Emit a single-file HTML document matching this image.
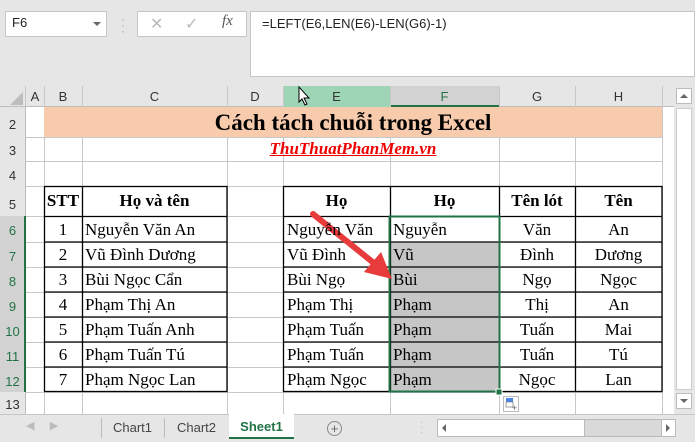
<!DOCTYPE html>
<html><head><meta charset="utf-8"><style>
*{margin:0;padding:0;box-sizing:border-box}
body{width:695px;height:442px;overflow:hidden;background:#e6e6e6;position:relative;font-family:"Liberation Sans",sans-serif}
.a{position:absolute}
.c{position:absolute;font-family:"Liberation Serif",serif;font-size:17px;line-height:25px;white-space:nowrap;color:#000}
.hd{position:absolute;font-size:13px;color:#333;text-align:center;line-height:21px}
.rh{position:absolute;left:0;width:25px;font-size:13px;color:#333;text-align:center}
</style></head><body>
<!-- formula bar -->
<div class="a" style="left:5px;top:11px;width:102px;height:26px;background:#fff;border:1px solid #c6c6c6"></div>
<div class="a" style="left:12px;top:15px;font-size:13px;color:#222">F6</div>
<div class="a" style="left:93px;top:22px;width:0;height:0;border-left:4px solid transparent;border-right:4px solid transparent;border-top:4px solid #666"></div>
<div class="a" style="left:121px;top:16px;color:#aaa;font-size:12px;line-height:6px">·<br>·<br>·</div>
<div class="a" style="left:137px;top:11px;width:110px;height:26px;background:#fff;border:1px solid #c6c6c6"></div>
<div class="a" style="left:150px;top:14px;color:#bbb;font-size:16px">✕</div>
<div class="a" style="left:185px;top:14px;color:#bbb;font-size:16px">✓</div>
<div class="a" style="left:222px;top:13px;color:#555;font-size:15px;font-style:italic;font-family:'Liberation Serif',serif">fx</div>
<div class="a" style="left:250px;top:11px;width:445px;height:66px;background:#fff;border:1px solid #c6c6c6"></div>
<div class="a" style="left:262px;top:16px;font-size:13px;color:#222">=LEFT(E6,LEN(E6)-LEN(G6)-1)</div>
<!-- sheet bg -->
<div class="a" style="left:0;top:86px;width:674px;height:328px;background:#fff"></div>
<!-- column headers -->
<div class="a" style="left:0;top:86px;width:674px;height:21px;background:#e6e6e6;border-bottom:1px solid #bdbdbd"></div>
<div class="a" style="left:10px;top:92px;width:0;height:0;border-left:13px solid transparent;border-bottom:13px solid #bdbdbd"></div>
<div class="a" style="left:283px;top:86px;width:107px;height:21px;background:#9fd5b7"></div>
<div class="a" style="left:390px;top:86px;width:109px;height:21px;background:#d2d2d2;border-bottom:2px solid #217346"></div>
<div class="hd" style="left:26px;top:86px;width:18px">A</div>
<div class="hd" style="left:44px;top:86px;width:38px">B</div>
<div class="hd" style="left:82px;top:86px;width:145px">C</div>
<div class="hd" style="left:227px;top:86px;width:56px">D</div>
<div class="hd" style="left:283px;top:86px;width:107px">E</div>
<div class="hd" style="left:390px;top:86px;width:109px;color:#217346">F</div>
<div class="hd" style="left:499px;top:86px;width:76px">G</div>
<div class="hd" style="left:575px;top:86px;width:87px">H</div>
<svg class="a" style="left:0;top:86px" width="674" height="328">
<g stroke="#c8c8c8" stroke-width="1">
<line x1="25.5" y1="0" x2="25.5" y2="21"/><line x1="44.5" y1="0" x2="44.5" y2="328"/><line x1="82.5" y1="0" x2="82.5" y2="328"/><line x1="227.5" y1="0" x2="227.5" y2="328"/><line x1="283.5" y1="0" x2="283.5" y2="328"/><line x1="390.5" y1="0" x2="390.5" y2="328"/><line x1="499.5" y1="0" x2="499.5" y2="328"/><line x1="575.5" y1="0" x2="575.5" y2="328"/><line x1="662.5" y1="0" x2="662.5" y2="328"/>
<line x1="0" y1="51.5" x2="662" y2="51.5"/><line x1="0" y1="75.5" x2="662" y2="75.5"/><line x1="0" y1="100.5" x2="662" y2="100.5"/><line x1="0" y1="130.5" x2="662" y2="130.5"/><line x1="0" y1="156.5" x2="662" y2="156.5"/><line x1="0" y1="181.5" x2="662" y2="181.5"/><line x1="0" y1="206.5" x2="662" y2="206.5"/><line x1="0" y1="231.5" x2="662" y2="231.5"/><line x1="0" y1="256.5" x2="662" y2="256.5"/><line x1="0" y1="281.5" x2="662" y2="281.5"/><line x1="0" y1="306.5" x2="662" y2="306.5"/>
</g></svg>
<!-- row headers -->
<div class="a" style="left:0;top:107px;width:26px;height:307px;background:#e6e6e6;border-right:1px solid #bdbdbd"></div>
<div class="a" style="left:0;top:216px;width:26px;height:176px;background:#d2d2d2;border-right:2px solid #217346"></div>
<div class="rh" style="top:107px;line-height:36px">2</div>
<div class="rh" style="top:137px;line-height:28px">3</div>
<div class="rh" style="top:161px;line-height:30px">4</div>
<div class="rh" style="top:186px;line-height:38px">5</div>
<div class="rh" style="top:216px;line-height:30px;color:#217346">6</div>
<div class="rh" style="top:242px;line-height:30px;color:#217346">7</div>
<div class="rh" style="top:267px;line-height:30px;color:#217346">8</div>
<div class="rh" style="top:292px;line-height:30px;color:#217346">9</div>
<div class="rh" style="top:317px;line-height:30px;color:#217346">10</div>
<div class="rh" style="top:342px;line-height:30px;color:#217346">11</div>
<div class="rh" style="top:367px;line-height:30px;color:#217346">12</div>
<div class="rh" style="top:392px;line-height:26px">13</div>
<!-- title -->
<div class="a" style="left:44px;top:107px;width:618px;height:30px;background:#f8cbad"></div>
<div class="c" style="left:44px;top:108px;width:618px;text-align:center;font-size:23px;font-weight:bold;line-height:30px">Cách tách chuỗi trong Excel</div>
<div class="c" style="left:44px;top:137px;width:618px;text-align:center;font-size:17px;font-weight:bold;font-style:italic;color:#e00;text-decoration:underline;line-height:24px">ThuThuatPhanMem.vn</div>
<!-- F fill -->
<div class="a" style="left:390px;top:242px;width:109px;height:150px;background:#c6c6c6"></div>
<!-- tables -->
<svg class="a" style="left:0;top:0" width="695" height="442">
<g stroke="#000" stroke-width="1.3" fill="none">
<rect x="44.5" y="186.5" width="182.5" height="205"/>
<line x1="82.5" y1="186" x2="82.5" y2="392"/>
<rect x="283.5" y="186.5" width="378.5" height="205"/>
<line x1="390.5" y1="186" x2="390.5" y2="392"/><line x1="499.5" y1="186" x2="499.5" y2="392"/><line x1="575.5" y1="186" x2="575.5" y2="392"/>
<path d="M44 216.5H227M44 242H227M44 267H227M44 292H227M44 317H227M44 342H227M44 367H227"/>
<path d="M283 216.5H662M283 242H662M283 267H662M283 292H662M283 317H662M283 342H662M283 367H662"/>
</g>
<rect x="389.5" y="216.5" width="110" height="175" fill="none" stroke="#217346" stroke-width="2"/>
<rect x="496" y="389" width="6" height="6" fill="#217346" stroke="#fff"/>
<rect x="503.5" y="396.5" width="15" height="15" fill="#fff" stroke="#bbb"/>
<rect x="506" y="398" width="7" height="4" fill="#4a86e8"/>
<rect x="506" y="402" width="7" height="5" fill="none" stroke="#888" stroke-width="0.8"/>
<text x="512" y="411" font-size="9" fill="#666">+</text>
<!-- arrow -->
<line x1="313" y1="214" x2="375" y2="264" stroke="#e83b3b" stroke-width="6" stroke-linecap="round"/>
<polygon points="392,279 364,272 381,252" fill="#e83b3b"/>
<!-- cursor -->
<path d="M299 87 L299 102 L302 99 L305 105 L307 104 L304 98 L309 98 Z" fill="#fff" stroke="#000" stroke-width="1"/>
</svg>
<!-- headers row 5 -->
<div class="c" style="left:44px;top:188px;width:38px;text-align:center;font-weight:bold">STT</div>
<div class="c" style="left:82px;top:188px;width:145px;text-align:center;font-weight:bold">Họ và tên</div>
<div class="c" style="left:283px;top:188px;width:107px;text-align:center;font-weight:bold">Họ</div>
<div class="c" style="left:390px;top:188px;width:109px;text-align:center;font-weight:bold">Họ</div>
<div class="c" style="left:499px;top:188px;width:76px;text-align:center;font-weight:bold">Tên lót</div>
<div class="c" style="left:575px;top:188px;width:87px;text-align:center;font-weight:bold">Tên</div>
<!-- data -->
<div class="c" style="left:44px;top:217px;width:38px;text-align:center">1<br>2<br>3<br>4<br>5<br>6<br>7</div>
<div class="c" style="left:85px;top:217px">Nguyễn Văn An<br>Vũ Đình Dương<br>Bùi Ngọc Cẩn<br>Phạm Thị An<br>Phạm Tuấn Anh<br>Phạm Tuấn Tú<br>Phạm Ngọc Lan</div>
<div class="c" style="left:287px;top:217px">Nguyễn Văn<br>Vũ Đình<br>Bùi Ngọ<br>Phạm Thị<br>Phạm Tuấn<br>Phạm Tuấn<br>Phạm Ngọc</div>
<div class="c" style="left:393px;top:217px">Nguyễn<br>Vũ<br>Bùi<br>Phạm<br>Phạm<br>Phạm<br>Phạm</div>
<div class="c" style="left:499px;top:217px;width:76px;text-align:center">Văn<br>Đình<br>Ngọ<br>Thị<br>Tuấn<br>Tuấn<br>Ngọc</div>
<div class="c" style="left:575px;top:217px;width:87px;text-align:center">An<br>Dương<br>Ngọc<br>An<br>Mai<br>Tú<br>Lan</div>
<!-- vertical scrollbar -->
<div class="a" style="left:676px;top:88px;width:16px;height:16px;background:#fff;border:1px solid #bbb"></div>
<div class="a" style="left:680px;top:94px;border-left:4px solid transparent;border-right:4px solid transparent;border-bottom:4px solid #666"></div>
<div class="a" style="left:676px;top:108px;width:16px;height:282px;background:#fff;border:1px solid #ccc"></div>
<div class="a" style="left:676px;top:393px;width:16px;height:16px;background:#fff;border:1px solid #bbb"></div>
<div class="a" style="left:680px;top:399px;border-left:4px solid transparent;border-right:4px solid transparent;border-top:4px solid #666"></div>
<!-- tabs -->
<div class="a" style="left:0;top:414px;width:695px;height:28px;background:#e6e6e6;border-top:1px solid #c6c6c6"></div>
<div class="a" style="left:26px;top:419px;font-size:11px;color:#bbb">◀&nbsp;&nbsp;&nbsp;&nbsp;&nbsp;▶</div>
<div class="a" style="left:101px;top:418px;width:1px;height:20px;background:#bbb"></div>
<div class="a" style="left:113px;top:420px;font-size:13px;color:#444">Chart1</div>
<div class="a" style="left:164px;top:418px;width:1px;height:20px;background:#bbb"></div>
<div class="a" style="left:177px;top:420px;font-size:13px;color:#444">Chart2</div>
<div class="a" style="left:229px;top:414px;width:65px;height:25px;background:#fff;border-bottom:2px solid #217346"></div>
<div class="a" style="left:229px;top:419px;width:65px;text-align:center;font-size:13px;font-weight:bold;color:#217346">Sheet1</div>
<div class="a" style="left:327px;top:421px;width:15px;height:15px;border:1px solid #888;border-radius:50%;text-align:center;font-size:13px;line-height:13px;color:#666">+</div>
<div class="a" style="left:420px;top:420px;color:#bbb;font-size:10px;line-height:5px">·<br>·<br>·</div>
<div class="a" style="left:437px;top:419px;width:237px;height:18px;background:#d9d9d9;border:1px solid #bbb"></div>
<div class="a" style="left:437px;top:419px;width:148px;height:18px;background:#fff;border:1px solid #bbb"></div>
<div class="a" style="left:442px;top:424px;border-top:4px solid transparent;border-bottom:4px solid transparent;border-right:4px solid #666"></div>
<div class="a" style="left:661px;top:419px;width:15px;height:18px;background:#fff;border:1px solid #bbb"></div>
<div class="a" style="left:666px;top:424px;border-top:4px solid transparent;border-bottom:4px solid transparent;border-left:4px solid #666"></div>
</body></html>
